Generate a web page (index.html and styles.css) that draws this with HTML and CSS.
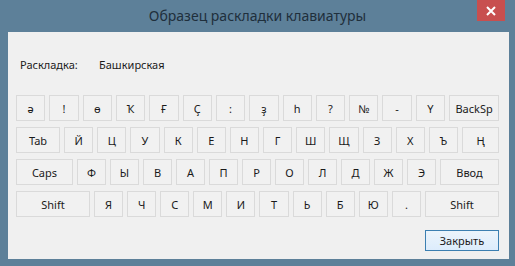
FILE: index.html
```html
<!DOCTYPE html>
<html lang="ru">
  <head>
    <meta charset="UTF-8" />
    <title>Образец раскладки клавиатуры</title>
    <link rel="stylesheet" href="styles.css">
  </head>

  <body>
    <div class="window">
      <div class="titleBar">
        <div class="titleText">Образец раскладки клавиатуры</div>
        <div class="closeBtn">
          <svg width="10" height="10" viewBox="0 0 10 10">
            <path d="M1 1 L9 9 M9 1 L1 9" stroke="#ffffff" stroke-width="2" />
          </svg>
        </div>
      </div>
      <div class="content">
        <div class="layoutRow">
          <span class="layoutLabel">Раскладка:</span>
          <span class="layoutName">Башкирская</span>
        </div>
        <div class="keyboard">
          <div class="keyRow">
            <div class="key">ә</div>
            <div class="key">!</div>
            <div class="key">ө</div>
            <div class="key">Ҡ</div>
            <div class="key">Ғ</div>
            <div class="key">Ҫ</div>
            <div class="key">:</div>
            <div class="key">ҙ</div>
            <div class="key">һ</div>
            <div class="key">?</div>
            <div class="key">№</div>
            <div class="key">-</div>
            <div class="key">Ү</div>
            <div class="key backsp">BackSp</div>
          </div>
          <div class="keyRow">
            <div class="key tab">Tab</div>
            <div class="key">Й</div>
            <div class="key">Ц</div>
            <div class="key">У</div>
            <div class="key">К</div>
            <div class="key">Е</div>
            <div class="key">Н</div>
            <div class="key">Г</div>
            <div class="key">Ш</div>
            <div class="key">Щ</div>
            <div class="key">З</div>
            <div class="key">Х</div>
            <div class="key">Ъ</div>
            <div class="key wideLetter">Ң</div>
          </div>
          <div class="keyRow">
            <div class="key caps">Caps</div>
            <div class="key">Ф</div>
            <div class="key">Ы</div>
            <div class="key">В</div>
            <div class="key">А</div>
            <div class="key">П</div>
            <div class="key">Р</div>
            <div class="key">О</div>
            <div class="key">Л</div>
            <div class="key">Д</div>
            <div class="key">Ж</div>
            <div class="key">Э</div>
            <div class="key enter">Ввод</div>
          </div>
          <div class="keyRow">
            <div class="key shiftL">Shift</div>
            <div class="key">Я</div>
            <div class="key">Ч</div>
            <div class="key">С</div>
            <div class="key">М</div>
            <div class="key">И</div>
            <div class="key">Т</div>
            <div class="key">Ь</div>
            <div class="key">Б</div>
            <div class="key">Ю</div>
            <div class="key">.</div>
            <div class="key shiftR">Shift</div>
          </div>
        </div>
        <div class="footer">
          <div class="closeButton">Закрыть</div>
        </div>
      </div>
    </div>
  </body>
</html>
```

FILE: styles.css
```css
body {
  margin: 0;
  padding: 0;
  background: #5d8099;
  font-family: "Noto Sans", "DejaVu Sans", sans-serif;
}

.window {
  width: 515px;
  height: 266px;
  background: #5d8099;
}

.titleBar {
  position: relative;
  height: 32px;
  display: flex;
  align-items: center;
  justify-content: center;
}

.titleText {
  font-size: 14px;
  color: #1f2f3c;
  margin-top: -1px;
}

.closeBtn {
  position: absolute;
  top: 0;
  right: 10px;
  width: 28px;
  height: 21px;
  background: #c84f4f;
  display: flex;
  align-items: center;
  justify-content: center;
}

.content {
  margin-left: 8px;
  width: 501px;
  height: 227px;
  box-sizing: border-box;
  padding: 25px 10px 0 8px;
  background: #f0f0f0;
}

.layoutRow {
  display: flex;
  height: 16px;
  line-height: 16px;
  font-size: 11px;
  color: #1a1a1a;
  padding-left: 4px;
}

.layoutLabel {
  width: 79px;
}

.keyboard {
  margin-top: 22px;
  display: flex;
  flex-direction: column;
  gap: 6px;
}

.keyRow {
  display: flex;
  gap: 4px;
  height: 26px;
}

.key {
  flex: 1;
  box-sizing: border-box;
  border: 1px solid #dadada;
  background: #f1f1f1;
  font-size: 11px;
  color: #1a1a1a;
  display: flex;
  align-items: center;
  justify-content: center;
}

.backsp {
  flex: 0 0 50px;
}

.tab {
  flex: 0 0 44px;
}

.wideLetter {
  flex: 0 0 37px;
}

.caps {
  flex: 0 0 57px;
}

.enter {
  flex: 0 0 59px;
}

.shiftL {
  flex: 0 0 74px;
}

.shiftR {
  flex: 0 0 74px;
}

.footer {
  display: flex;
  justify-content: flex-end;
  margin-top: 13px;
}

.closeButton {
  width: 74px;
  height: 21px;
  box-sizing: border-box;
  border: 1px solid #3c7fb1;
  background: linear-gradient(#ecf4fb, #dcecfc);
  font-size: 11px;
  color: #1a1a1a;
  display: flex;
  align-items: center;
  justify-content: center;
}
```
